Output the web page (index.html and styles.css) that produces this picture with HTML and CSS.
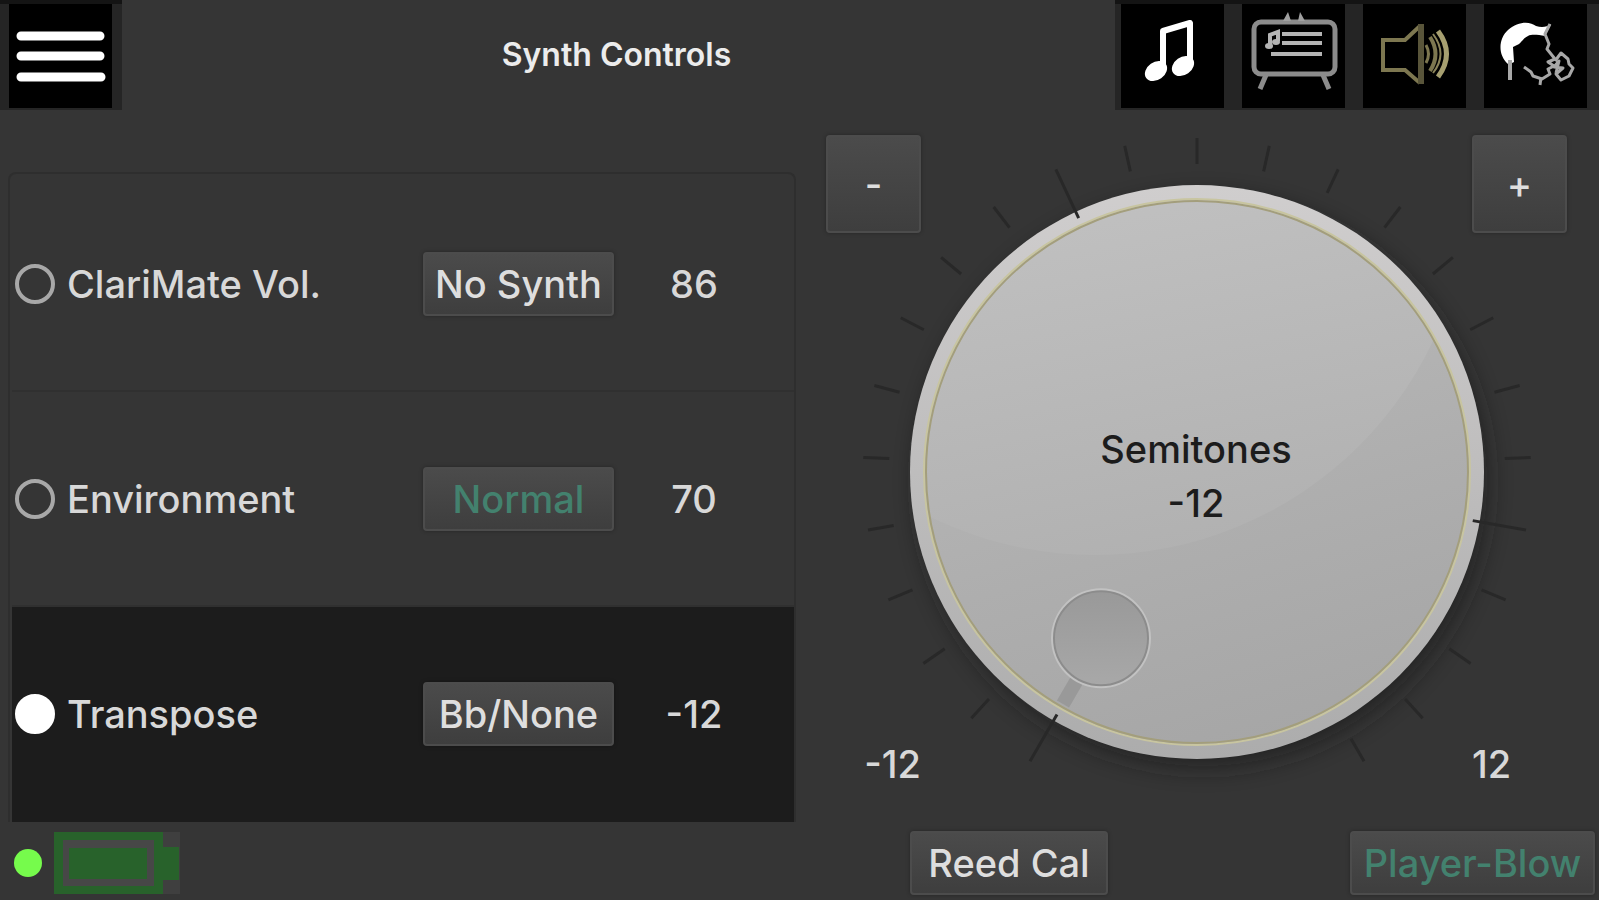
FILE: index.html
```html
<!DOCTYPE html>
<html lang="en">
<head>
  <meta charset="UTF-8">
  <meta name="viewport" content="width=device-width, initial-scale=1.0">
  <title>Synth Controls</title>
  <link rel="stylesheet" href="styles.css">
</head>
<body>
  <!-- Top bar -->
  <header class="topbar">
    <div class="menu">
      <button class="icon-button" aria-label="Menu">
        <svg viewBox="0 0 103 104">
          <g stroke="#fff" stroke-width="9" stroke-linecap="round">
            <path d="M12 32H91M12 52H91M12 73H92"/>
          </g>
        </svg>
      </button>
    </div>
    <h1>Synth Controls</h1>
    <nav class="tools">
      <button class="icon-button" aria-label="Music">
        <svg viewBox="0 0 103 104" fill="none" stroke="#fff">
          <path d="M42 66V27L69 19V61" stroke-width="6" stroke-linejoin="round"/>
          <ellipse cx="35" cy="67" rx="12" ry="9" transform="rotate(-35 35 67)" fill="#fff" stroke="none"/>
          <ellipse cx="62" cy="62" rx="12" ry="9" transform="rotate(-35 62 62)" fill="#fff" stroke="none"/>
        </svg>
      </button>
      <button class="icon-button" aria-label="Lessons">
        <svg viewBox="0 0 103 104" fill="none" stroke="#8c8c8c">
          <rect x="12" y="18" width="81" height="52" rx="7" stroke-width="5"/>
          <path d="M41 17L46 8L49 17ZM56 17L58 8L63 17Z" fill="#a0a0a0" stroke="none"/>
          <path d="M24 71L18 85M81 71L87 85" stroke-width="5"/>
          <path d="M40 30H80M40 39H80M29 50H80" stroke="#b4b4b4" stroke-width="4"/>
          <path d="M28 40V31L36 28V37" stroke="#b4b4b4" stroke-width="4"/>
          <ellipse cx="27" cy="42" rx="4" ry="3" fill="#b4b4b4" stroke="none"/>
          <ellipse cx="34" cy="38" rx="4" ry="3" fill="#b4b4b4" stroke="none"/>
        </svg>
      </button>
      <button class="icon-button" aria-label="Sound">
        <svg viewBox="0 0 103 104" fill="none" stroke="#7d7750">
          <path d="M57 22L42 36H20V66H42L57 79" stroke-width="4"/>
          <path d="M58 20V80" stroke="#59553a" stroke-width="6"/>
          <path d="M63 41Q68 50 63 59" stroke-width="3"/>
          <path d="M67 33Q78 50 67 67" stroke-width="4"/>
          <path d="M75 27Q92 50 75 73" stroke="#a69f70" stroke-width="5"/>
          <path d="M70 30Q85 50 70 69" stroke="#8b845a" stroke-width="2"/>
        </svg>
      </button>
      <button class="icon-button" aria-label="Player">
        <svg viewBox="0 0 103 104" fill="none" stroke="#a8a8a8" stroke-width="3" stroke-linejoin="round">
          <path d="M26 60L24 60C13 50 15 34 24 26C34 17 46 17 52 22C58 24 63 23 67 20L61 32C54 31 48 30 44 32C39 34 37 40 33 41L29 43L30 58Z" fill="#fff" stroke="none"/>
          <path d="M26 56V76" stroke-width="4"/>
          <path d="M66 20L61 30L65 40L63 45L71 55L64 58L70 62L64 65L66 70L58 75L49 72L47 68L40 63M57 73L56 81"/>
          <path d="M71 57L77 49L84 55L85 60L89 64L85 72L77 76L72 70L79 64L70 63L75 57L72 69"/>
        </svg>
      </button>
    </nav>
  </header>

  <main class="main">
    <!-- Parameter list -->
    <section class="params">
      <div class="param">
        <label><input type="radio" name="param" value="volume">ClariMate Vol.</label>
        <button class="button">No Synth</button>
        <span class="value">86</span>
      </div>
      <div class="param">
        <label><input type="radio" name="param" value="environment">Environment</label>
        <button class="button green">Normal</button>
        <span class="value">70</span>
      </div>
      <div class="param">
        <label><input type="radio" name="param" value="transpose" checked>Transpose</label>
        <button class="button">Bb/None</button>
        <span class="value" id="transposeValue">-12</span>
      </div>
    </section>

    <!-- Dial -->
    <section class="stage">
      <svg class="dial" viewBox="0 0 741 670" aria-hidden="true">
        <defs>
          <linearGradient id="rim" x1="0" y1="0" x2="0" y2="1">
            <stop offset="0" stop-color="#d0cece"/>
            <stop offset="1" stop-color="#acacac"/>
          </linearGradient>
          <linearGradient id="face" x1="0.35" y1="0" x2="0.65" y2="1">
            <stop offset="0" stop-color="#bcbcbc"/>
            <stop offset="0.6" stop-color="#aeaeae"/>
            <stop offset="1" stop-color="#a6a6a6"/>
          </linearGradient>
          <linearGradient id="gloss" x1="0.4" y1="0" x2="0.6" y2="1">
            <stop offset="0.3" stop-color="#c7c7c7"/>
            <stop offset="1" stop-color="#b1b1b1"/>
          </linearGradient>
          <linearGradient id="dimple" x1="0" y1="0" x2="0" y2="1">
            <stop offset="0" stop-color="#999"/>
            <stop offset="1" stop-color="#a8a8a8"/>
          </linearGradient>
          <filter id="shadow" x="-20%" y="-20%" width="140%" height="140%">
            <feGaussianBlur stdDeviation="12"/>
          </filter>
          <clipPath id="faceClip"><circle cx="371" cy="337" r="271"/></clipPath>
        </defs>
        <circle cx="377" cy="347" r="284" fill="#1c1c1c" opacity="0.7" filter="url(#shadow)"/>
        <circle cx="371" cy="337" r="287" fill="url(#rim)"/>
        <circle cx="371" cy="337" r="271" fill="url(#face)"/>
        <circle cx="269" cy="46" r="374" fill="url(#gloss)" clip-path="url(#faceClip)"/>
        <circle cx="371" cy="337" r="273" fill="none" stroke="#c8c5a0" stroke-width="2"/>
        <circle cx="371" cy="337" r="271" fill="none" stroke="#a39e7c" stroke-width="2"/>
        <g id="ticks" stroke="#282828" stroke-width="3"></g>
        <g id="pointer" transform="rotate(-150 371 337)">
          <rect x="364" y="69" width="14" height="27" fill="#999"/>
        </g>
        <g id="grip" transform="translate(275 504)">
          <circle r="50" fill="#c2c2c2"/>
          <circle r="47" fill="url(#dimple)" stroke="#8c8c8c" stroke-width="2"/>
        </g>
        <text x="370" y="328">Semitones</text>
        <text x="370" y="382" id="dialValue">-12</text>
      </svg>
      <input class="dial-input" id="dialInput" type="range" min="-12" max="12" value="-12" aria-label="Semitones">
      <button class="button step minus" id="minus">-</button>
      <button class="button step plus" id="plus">+</button>
      <span class="limit low">-12</span>
      <span class="limit high">12</span>
    </section>
  </main>

  <!-- Status and actions -->
  <footer class="footer">
    <div class="status">
      <span class="led"></span>
      <svg class="battery" viewBox="0 0 126 62" role="img" aria-label="Battery full">
        <rect width="126" height="62" fill="#3f3f3f"/>
        <rect width="109" height="62" fill="#28622b"/>
        <rect x="9" y="8" width="91" height="46" fill="#474747"/>
        <rect x="15" y="16" width="78" height="31" fill="#28622b"/>
        <rect x="109" y="15" width="16" height="33" fill="#28622b"/>
      </svg>
    </div>
    <div class="actions">
      <button class="button reed">Reed Cal</button>
      <button class="button green player">Player-Blow</button>
    </div>
  </footer>

  <script>
    const cx = 371;
    const cy = 337;
    const ticks = document.getElementById("ticks");
    const input = document.getElementById("dialInput");

    // one tick per semitone, every tenth one is long
    for (let i = 0; i <= 24; i++) {
      const line = document.createElementNS("http://www.w3.org/2000/svg", "line");
      line.setAttribute("x1", cx);
      line.setAttribute("x2", cx);
      line.setAttribute("y1", cy - 334);
      line.setAttribute("y2", cy - (i % 10 === 0 ? 280 : 308));
      line.setAttribute("transform", `rotate(${-150 + i * 12.5} ${cx} ${cy})`);
      ticks.appendChild(line);
    }

    function update() {
      const angle = input.value * 12.5;
      const rad = angle * Math.PI / 180;
      const x = cx + 192 * Math.sin(rad);
      const y = cy - 192 * Math.cos(rad);
      document.getElementById("pointer").setAttribute("transform", `rotate(${angle} ${cx} ${cy})`);
      document.getElementById("grip").setAttribute("transform", `translate(${x} ${y})`);
      document.getElementById("dialValue").textContent = input.value;
      document.getElementById("transposeValue").textContent = input.value;
    }

    input.addEventListener("input", update);
    document.getElementById("minus").addEventListener("click", () => {
      input.stepDown();
      update();
    });
    document.getElementById("plus").addEventListener("click", () => {
      input.stepUp();
      update();
    });
    update();
  </script>
</body>
</html>
```
FILE: styles.css
```css
* {
  margin: 0;
  padding: 0;
  box-sizing: border-box;
}

body {
  font-family: Inter, "Liberation Sans", sans-serif;
  font-size: 38px;
  font-weight: 500;
  line-height: 46px;
  color: #d8d8d8;
  background-color: #353535;
}

button, input {
  font: inherit;
  color: inherit;
}

/* Top bar */
.topbar {
  display: flex;
  align-items: flex-start;
}

.topbar h1 {
  flex: 1;
  padding: 32px 4px 0 0;
  text-align: center;
  font-size: 32px;
  font-weight: 600;
  color: #ececec;
}

.menu, .tools {
  display: flex;
  background-color: #252525;
  border-top: 4px solid #141414;
  padding-bottom: 2px;
}

.menu {
  padding-left: 9px;
  padding-right: 10px;
}

.tools {
  gap: 18px;
  padding-left: 6px;
  padding-right: 12px;
}

.icon-button {
  width: 103px;
  height: 104px;
  border: none;
  background-color: #000;
  cursor: pointer;
}

.icon-button svg {
  display: block;
}

/* Shared button */
.button {
  height: 64px;
  border: 2px solid #4c4c4c;
  border-radius: 4px;
  background: linear-gradient(#4b4b4b, #3e3e3e);
  box-shadow: 0 0 4px rgba(0, 0, 0, 0.3);
  color: #dedede;
  white-space: nowrap;
  cursor: pointer;
}

.button.green {
  color: #43816e;
}

/* Two halves */
.main, .footer {
  display: grid;
  grid-template-columns: minmax(0, 798fr) minmax(0, 801fr);
}

.main {
  align-items: start;
}

/* Parameter list */
.params {
  margin: 62px 2px 0 8px;
  padding: 3px 0 0 2px;
  border: 2px solid #2e2e2e;
  border-bottom: none;
  border-radius: 8px 8px 0 0;
}

.param {
  display: grid;
  grid-template-columns: 1fr 191px 160px;
  align-items: center;
  min-height: 215px;
  padding: 0 20px 0 3px;
  border-bottom: 2px solid #303030;
}

.param:has(input:checked) {
  background-color: #1c1c1c;
  border-bottom-color: #1c1c1c;
}

.param label {
  display: flex;
  align-items: center;
  gap: 12px;
}

.param input {
  appearance: none;
  width: 40px;
  height: 40px;
  border: 4px solid #a8a8a8;
  border-radius: 50%;
}

.param input:checked {
  border-color: #fff;
  background-color: #fff;
}

.value {
  text-align: center;
}

/* Dial */
.stage {
  display: grid;
  grid-template-columns: 95px 1fr 95px;
  grid-template-rows: auto 1fr auto;
  padding: 25px 32px 0 28px;
}

.dial {
  grid-area: 1 / 1 / 4 / 4;
  display: block;
  width: 100%;
  overflow: visible;
}

.dial text {
  font-size: 38px;
  text-anchor: middle;
  fill: #1c1c1c;
}

.dial-input {
  grid-area: 1 / 2 / 4 / 3;
  opacity: 0;
  cursor: pointer;
}

.step {
  grid-row: 1;
  height: 98px;
  font-size: 38px;
}

.plus {
  grid-column: 3;
}

.minus {
  grid-column: 1;
}

.limit {
  grid-row: 3;
  margin-bottom: 18px;
}

.low {
  grid-column: 1;
  text-align: right;
}

.high {
  grid-column: 3;
}

/* Footer */
.footer {
  padding: 9px 0 3px;
}

.status {
  display: flex;
  align-items: center;
  gap: 12px;
  padding-left: 14px;
}

.led {
  width: 28px;
  height: 28px;
  border-radius: 50%;
  background-color: #76fb4c;
}

.battery {
  width: 126px;
  height: 62px;
}

.actions {
  display: flex;
  justify-content: space-between;
  padding: 0 4px 0 112px;
}

.reed {
  width: 198px;
}

.player {
  width: 245px;
}
```
